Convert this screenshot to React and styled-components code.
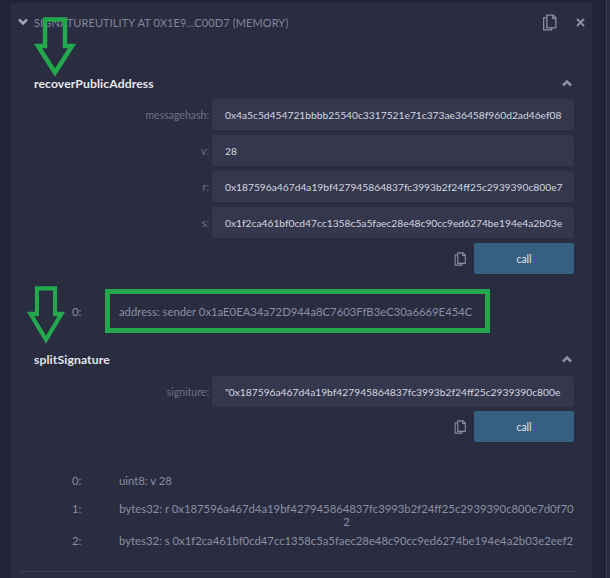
import React from 'react';
import styled, { createGlobalStyle } from 'styled-components';

const GlobalStyle = createGlobalStyle`
  html, body {
    margin: 0;
    padding: 0;
    background: #222336;
  }
  body {
    font-family: Lato, "Open Sans", sans-serif;
  }
`

const Page = styled.div`
  position: relative;
  width: 610px;
  height: 578px;
  overflow: hidden;
  display: grid;
  grid-template-columns: 10px 582px 14px 4px;
  background: #222336;
`

const Gutter = styled.div`
  background: #222336;
`

const ScrollBar = styled.div`
  background: #2a2c40;
  border-left: 1px solid #3a3d55;
`

const Panel = styled.div`
  margin-top: 3px;
  background: #2a2c3f;
  padding: 0 18px 0 10px;
  display: flex;
  flex-direction: column;
`

const TitleBar = styled.div`
  height: 38px;
  margin: 0 -13px 0 -3px;
  display: flex;
  align-items: center;
  color: #82859b;
  font-size: 11px;
  letter-spacing: 0.1px;
  svg {
    flex: none;
  }
`

const Title = styled.span`
  margin-left: 5px;
  flex: 1;
`

const CopyIcon = ({ size = 16, color = '#8b8fa6' }) => (
  <svg width={size} height={size} viewBox="0 0 16 16" fill="none" stroke={color} strokeWidth="1.2">
    <path d="M5.5 3.5h-3v11.5h7.5v-2" />
    <path d="M5.5 1h6l2.500 2.500v9.500h-8.500z" />
    <path d="M11 1v3h3" />
  </svg>
)

const CloseIcon = styled.svg`
  margin: 0 2px 0 18px;
`

const FnHeader = styled.div`
  height: ${p => p.$height}px;
  box-sizing: border-box;
  padding: ${p => p.$top}px 1px 0 14px;
  display: flex;
  align-items: center;
  justify-content: space-between;
  color: #e4e6ee;
  font-size: 12.2px;
  font-weight: 700;
  letter-spacing: 0.1px;
`

const Fields = styled.div`
  display: flex;
  flex-direction: column;
  gap: 5px;
`

const FieldRow = styled.div`
  display: flex;
  align-items: center;
  justify-content: flex-end;
`

const FieldLabel = styled.label`
  margin-right: 3px;
  color: #6f7288;
  font-size: 10.5px;
`

const FieldInput = styled.div`
  width: 362px;
  height: 31px;
  box-sizing: border-box;
  padding: 0 12px 0 13px;
  background: #35384c;
  border-radius: 2px;
  display: flex;
  align-items: center;
  color: #d4d6e0;
  font-size: 10.25px;
  white-space: nowrap;
  overflow: hidden;
`

const ActionRow = styled.div`
  margin-top: ${p => p.$top}px;
  display: flex;
  align-items: center;
  justify-content: flex-end;
  gap: 7px;
`

const CallButton = styled.div`
  width: 100px;
  height: 31px;
  background: #35607f;
  border-radius: 2px;
  display: flex;
  align-items: center;
  justify-content: center;
  color: #e4e6ee;
  font-size: 10.5px;
`

const Results = styled.div`
  margin-top: ${p => p.$top}px;
  display: flex;
  flex-direction: column;
`

const ResultRow = styled.div`
  height: ${p => p.$height}px;
  box-sizing: border-box;
  padding: ${p => p.$top || 0}px 0 0 52px;
  display: grid;
  grid-template-columns: 47px 455px;
  align-items: ${p => (p.$top ? 'start' : 'center')};
  color: #8b8fa6;
  font-size: 11.3px;
  line-height: 13px;
`

const ResultValue = styled.div`
  text-align: ${p => (p.$centered ? 'center' : 'left')};
  white-space: nowrap;
`

const HighlightValue = styled.div`
  box-sizing: border-box;
  width: 385px;
  height: 44px;
  margin-left: -14px;
  padding-left: 9px;
  border: 5px solid #23a84e;
  display: flex;
  align-items: center;
  white-space: nowrap;
`

const Divider = styled.div`
  margin-top: 22px;
  height: 1px;
  background: #3c3f54;
`

const Chevron = ({ up, color = '#8b8fa6', size = 12 }) => (
  <svg width={size} height={size} viewBox="0 0 12 12" fill="none" stroke={color} strokeWidth="2.6">
    <path d={up ? 'M2 8.500l4-4 4 4' : 'M2 3.500l4 4 4-4'} />
  </svg>
)

const ArrowMark = styled.svg`
  position: absolute;
  left: ${p => p.$left}px;
  top: ${p => p.$top}px;
  pointer-events: none;
`

const Arrow = ({ left, top, width, height }) => (
  <ArrowMark
    $left={left}
    $top={top}
    width={width}
    height={height}
    viewBox="0 0 42 60"
    preserveAspectRatio="none"
  >
    <path
      d="M11 2.500H31V29H38L21 55.500L4 29H11Z"
      fill="none"
      stroke="#23a84e"
      strokeWidth="4.500"
    />
  </ArrowMark>
)

const Field = ({ label, value }) => (
  <FieldRow>
    <FieldLabel>{label}:</FieldLabel>
    <FieldInput>{value}</FieldInput>
  </FieldRow>
)

const Action = ({ top }) => (
  <ActionRow $top={top}>
    <CopyIcon size={14} />
    <CallButton>call</CallButton>
  </ActionRow>
)

const App = () => {
  return (
    <Page>
      <GlobalStyle />
      <Gutter />
      <Panel>
        <TitleBar>
          <Chevron color="#a0a3b6" />
          <Title>SIGNATUREUTILITY AT 0X1E9...C00D7 (MEMORY)</Title>
          <CopyIcon size={17} />
          <CloseIcon width="9" height="9" viewBox="0 0 9 9" fill="none" stroke="#8b8fa6" strokeWidth="2">
            <path d="M1 1l7 7M8 1l-7 7" />
          </CloseIcon>
        </TitleBar>
        <FnHeader $height={58} $top={26}>
          recoverPublicAddress
          <Chevron up />
        </FnHeader>
        <Fields>
          <Field label="messagehash" value="0x4a5c5d454721bbbb25540c3317521e71c373ae36458f960d2ad46ef08" />
          <Field label="v" value="28" />
          <Field label="r" value="0x187596a467d4a19bf427945864837fc3993b2f24ff25c2939390c800e7" />
          <Field label="s" value="0x1f2ca461bf0cd47cc1358c5a5faec28e48c90cc9ed6274be194e4a2b03e" />
        </Fields>
        <Action top={5} />
        <Results $top={15}>
          <ResultRow $height={44}>
            0:
            <HighlightValue>address: sender 0x1aE0EA34a72D944a8C7603FfB3eC30a6669E454C</HighlightValue>
          </ResultRow>
        </Results>
        <FnHeader $height={43} $top={9}>
          splitSignature
          <Chevron up />
        </FnHeader>
        <Fields>
          <Field label="signiture" value={'"0x187596a467d4a19bf427945864837fc3993b2f24ff25c2939390c800e'} />
        </Fields>
        <Action top={4} />
        <Results $top={24}>
          <ResultRow $height={28}>
            0:
            <ResultValue>uint8: v 28</ResultValue>
          </ResultRow>
          <ResultRow $height={37} $top={8}>
            1:
            <ResultValue $centered>
              bytes32: r 0x187596a467d4a19bf427945864837fc3993b2f24ff25c2939390c800e7d0f70
              <br />
              2
            </ResultValue>
          </ResultRow>
          <ResultRow $height={18}>
            2:
            <ResultValue>bytes32: s 0x1f2ca461bf0cd47cc1358c5a5faec28e48c90cc9ed6274be194e4a2b03e2eef2</ResultValue>
          </ResultRow>
        </Results>
        <Divider />
      </Panel>
      <Gutter />
      <ScrollBar />
      <Arrow left={34} top={17} width={42} height={60} />
      <Arrow left={27} top={286} width={38} height={58} />
    </Page>
  );
}

export default App;
